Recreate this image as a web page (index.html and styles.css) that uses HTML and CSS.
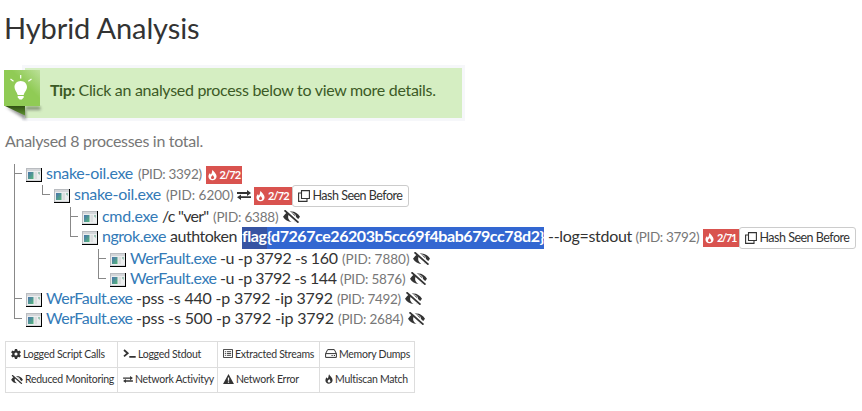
FILE: index.html
```
<!DOCTYPE html>
<html lang="en">
<head>
<meta charset="utf-8">
<title>Hybrid Analysis</title>
<link rel="stylesheet" href="styles.css">
</head>
<body>
<svg class="defs" aria-hidden="true">
  <defs>
    <linearGradient id="pane" x1="0" y1="0" x2="1" y2="1"><stop offset="0" stop-color="#4a73ae"/><stop offset="1" stop-color="#55b67a"/></linearGradient>
    <linearGradient id="tile" x1="0" y1="1" x2="1" y2="0"><stop offset=".6" stop-color="#90cb55"/><stop offset="1" stop-color="#bce09a"/></linearGradient>
    <linearGradient id="fold" x1="0" y1="0" x2="0" y2="1"><stop offset="0" stop-color="#304f13"/><stop offset="1" stop-color="#5f9530"/></linearGradient>
    <filter id="soft"><feGaussianBlur stdDeviation="1.6"/></filter>
  </defs>
  <symbol id="app" viewBox="0 0 16 14">
    <path d="M0 0H16V14H0Z" fill="#b9bcc0"/><path d="M1 1H15V3H1Z" fill="#d4d6d9"/><path d="M1 3H15V12.5H1Z" fill="#eceeef"/>
    <path d="M2 4H7.5V11H2Z" fill="url(#pane)"/><path d="M8.5 4H11V11H8.5Z" fill="#dcdedf"/><path d="M12 4H14V7L12 5.5Z" fill="#9cc4b5"/>
    <path d="M15 0H16V14H0V13H15Z" fill="#000"/>
  </symbol>
  <symbol id="fire" viewBox="0 0 12 14"><path fill-rule="evenodd" d="M6.2 0C6.8 2.4 11.4 4.6 11.4 9C11.4 12 9 14 6 14S.6 12 .6 8.9C.6 6.8 1.6 5.2 2.7 4.2C2.8 5.3 3.1 6 3.8 6.3C5.7 5.1 5 2 6.2 0ZM6.4 6.6C6.2 8 4 8.7 4 10.5C4 11.7 4.9 12.4 6 12.4S8.2 11.7 8.2 10.4C8.2 9 6.7 8.3 6.4 6.6Z"/></symbol>
  <symbol id="swap" viewBox="0 0 14 10"><path d="M0 2H10V0L14 3L10 6V4H0ZM14 6.2H4V4.4L0 7.2L4 10V8.1H14Z"/></symbol>
  <symbol id="eye" viewBox="0 0 17 13"><path d="M2 4.3C4.200 1.8 6.300 1.500 8.500 1.500C12 1.500 15 3.500 17 6.700C15.500 9 13.800 10.600 11.500 11.400C14 8.500 13.500 4.200 10 2.800C8 2.200 6.500 3 5.800 4.200C4.300 7.500 5.500 10 8.500 11.900C5 11.900 2 10 0 6.700Z"/><path d="M8 4C10.500 3.700 12 5.200 11.600 7.200" fill="none" stroke="currentColor" stroke-width="1.300"/><path d="M2.500 -.500L16.500 12.500" stroke="#fff" stroke-width="3.400"/><path d="M1.500 .300L15.500 12.600" stroke="currentColor" stroke-width="1.800"/></symbol>
  <symbol id="copy" viewBox="0 0 12 12"><path d="M3.500 .600H11.400V8.500H3.500ZM3.500 3H.600V11.400H9V8.500" fill="none" stroke="currentColor" stroke-width="1.100"/></symbol>
  <symbol id="gear" viewBox="0 0 12 12"><path d="M6 0V12M.800 3L11.200 9M11.200 3L.800 9" stroke="currentColor" stroke-width="2.800"/><circle cx="6" cy="6" r="3.200" fill="none" stroke="currentColor" stroke-width="2.600"/><circle cx="6" cy="6" r="1.900" fill="#fff"/></symbol>
  <symbol id="term" viewBox="0 0 13 9"><path d="M1 1L4.700 4.200L1 7.400M6.300 7.800H12.700" fill="none" stroke="currentColor" stroke-width="1.800"/></symbol>
  <symbol id="list" viewBox="0 0 11 10"><path d="M.500 .500H10.500V9.500H.500ZM2 3H3.200M4.200 3H9M2 5H3.200M4.200 5H9M2 7H3.200M4.200 7H9" fill="none" stroke="currentColor"/></symbol>
  <symbol id="disk" viewBox="0 0 12 9"><path d="M.600 4.600L2.700 .600H9.300L11.400 4.600V8.400H.600ZM.600 4.600H11.400M6.500 6.500H7.700M8.800 6.500H10" fill="none" stroke="currentColor" stroke-linejoin="round"/></symbol>
  <symbol id="warn" viewBox="0 0 12 11"><path fill-rule="evenodd" d="M6 0L12 11H0ZM5.300 3.800V7.300H6.700V3.800ZM5.300 8.200V9.500H6.700V8.200Z"/></symbol>
</svg>

<h1>Hybrid Analysis</h1>

<div class="tip">
  <svg class="tip-icon" viewBox="0 0 44 52" aria-hidden="true">
    <path d="M2 37L22 50V37H36L37 40H22Z" fill="#444" opacity=".55" filter="url(#soft)"/>
    <path d="M1 36H21V45.500Z" fill="url(#fold)"/>
    <path d="M21 36H36V38H21Z" fill="#4f7a2b" opacity=".35" filter="url(#soft)"/>
    <path d="M0 0H36V36H0Z" fill="url(#tile)"/>
    <path d="M16.700 11C20.600 11 23 13.800 23 17C23 20.200 20.600 21.500 19.700 25H13.700C12.800 21.500 10.500 20.200 10.500 17C10.500 13.800 12.900 11 16.700 11ZM13.700 26H19.700V27.500L17.800 29.500H15.600L13.700 27.500Z" fill="#fff"/>
    <path d="M16.700 5V8.500M6.500 9L9.500 11.200M27.500 9L24.300 11.200" stroke="#fff" stroke-width="1.200"/>
  </svg>
  <p><strong>Tip:</strong><span>Click an analysed process below to view more details.</span></p>
</div>

<p class="total">Analysed 8 processes in total.</p>

<ul class="tree">
  <li>
    <div class="row"><svg class="app"><use href="#app"/></svg><a class="snake">snake-oil.exe</a><small class="p63">(PID: 3392)</small><b class="badge"><svg><use href="#fire"/></svg><span>2/72</span></b></div>
    <ul class="second">
      <li>
        <div class="row"><svg class="app"><use href="#app"/></svg><a class="snake">snake-oil.exe</a><small class="p67">(PID: 6200)</small><svg class="swap"><use href="#swap"/></svg><b class="badge wide"><svg><use href="#fire"/></svg><span>2/72</span></b><button><svg><use href="#copy"/></svg>Hash Seen Before</button></div>
        <ul>
          <li><div class="row"><svg class="app"><use href="#app"/></svg><a class="cmd">cmd.exe</a><span class="ver">/c "ver"</span><small class="p65">(PID: 6388)</small><svg class="eye"><use href="#eye"/></svg></div></li>
          <li>
            <div class="row"><svg class="app"><use href="#app"/></svg><a class="ngrok">ngrok.exe</a><span class="auth">authtoken</span><mark><span>flag</span>{d7267ce26203b5cc69f4bab679cc78d2}</mark><span class="log">--log=stdout</span><small class="p63">(PID: 3792)</small><b class="badge tight"><svg><use href="#fire"/></svg><span>2/71</span></b><button><svg><use href="#copy"/></svg>Hash Seen Before</button></div>
            <ul>
              <li><div class="row"><svg class="app"><use href="#app"/></svg><a class="wer">WerFault.exe</a><span class="u160">-u -p 3792 -s 160</span><small class="p67">(PID: 7880)</small><svg class="eye"><use href="#eye"/></svg></div></li>
              <li><div class="row"><svg class="app"><use href="#app"/></svg><a class="wer">WerFault.exe</a><span class="u144">-u -p 3792 -s 144</span><small class="p65">(PID: 5876)</small><svg class="eye"><use href="#eye"/></svg></div></li>
            </ul>
          </li>
        </ul>
      </li>
    </ul>
  </li>
  <li><div class="row"><svg class="app"><use href="#app"/></svg><a class="wer">WerFault.exe</a><span class="pss">-pss -s 440 -p 3792 -ip 3792</span><small class="p63">(PID: 7492)</small><svg class="eye"><use href="#eye"/></svg></div></li>
  <li><div class="row"><svg class="app"><use href="#app"/></svg><a class="wer">WerFault.exe</a><span class="pss last">-pss -s 500 -p 3792 -ip 3792</span><small class="p65">(PID: 2684)</small><svg class="eye"><use href="#eye"/></svg></div></li>
</ul>

<div class="legend">
  <div><svg class="i-gear"><use href="#gear"/></svg>Logged Script Calls</div>
  <div><svg class="i-term"><use href="#term"/></svg>Logged Stdout</div>
  <div class="streams"><svg class="i-list"><use href="#list"/></svg>Extracted Streams</div>
  <div><svg class="i-disk"><use href="#disk"/></svg>Memory Dumps</div>
  <div><svg class="i-eye"><use href="#eye"/></svg>Reduced Monitoring</div>
  <div><svg class="i-swap"><use href="#swap"/></svg>Network Activityy</div>
  <div><svg class="i-warn"><use href="#warn"/></svg>Network Error</div>
  <div><svg class="i-fire"><use href="#fire"/></svg>Multiscan Match</div>
</div>
</body>
</html>
```
FILE: styles.css
```
* { box-sizing: border-box; }
body { margin: 0; background: #fff; color: #333; font: 16px/20px Lato, sans-serif; overflow: hidden; }
svg { display: block; flex: none; fill: currentColor; overflow: visible; }
.defs { position: absolute; width: 0; height: 0; }
h1 { margin: 0; padding: 10px 0 0 4px; height: 65px; font-size: 29px; line-height: 36px; font-weight: 400; letter-spacing: -.1px; }

.tip { position: relative; width: 443px; height: 56px; margin-left: 22px; border: 3px solid #f6f7fa; background: #d5eec2; color: #3c5a26; }
.tip-icon { position: absolute; left: -21px; top: 2px; width: 44px; height: 52px; }
.tip p { display: flex; margin: 0; padding: 12px 0 0 25px; white-space: nowrap; }
.tip strong { width: 28.5px; letter-spacing: -.45px; }
.tip span { letter-spacing: -.3px; }
.total { margin: 10px 0 0 5px; height: 33px; color: #777; letter-spacing: -.3px; }

.tree, .tree ul { list-style: none; margin: 0; padding: 0; }
.tree { margin-left: 14px; }
.tree ul { margin: 2px 0 0 16px; }
.tree ul.second { margin-top: 1px; }
.tree li { position: relative; padding-left: 12px; }
.tree li::before { content: ""; position: absolute; left: 0; top: 0; bottom: 0; width: 1px; background: #888; }
.tree li:last-child::before { bottom: auto; height: 10px; }
.tree li::after { content: ""; position: absolute; left: 0; top: 9px; width: 8px; height: 1px; background: #888; }
.row { display: flex; height: 20px; white-space: nowrap; }
.row > .app { width: 16px; height: 14px; margin: 4px 4px 0 0; }
.row a { color: #337ab7; }
.row a, .row > span { flex: none; line-height: 18px; }
.row small { flex: none; font-size: 13.5px; line-height: 20px; color: #777; }
.snake { width: 92px; letter-spacing: -.29px; }
.cmd { width: 60px; letter-spacing: -.28px; }
.ngrok { width: 68px; letter-spacing: -.46px; }
.wer { width: 90px; letter-spacing: -.48px; }
.ver { width: 51px; letter-spacing: -.75px; }
.auth { width: 72px; letter-spacing: -.47px; }
.log { width: 87.5px; margin-left: 4px; letter-spacing: -.3px; }
.u160 { width: 122px; letter-spacing: -.38px; }
.u144 { width: 120px; letter-spacing: -.44px; }
.pss { width: 201px; letter-spacing: -.18px; }
.pss.last { width: 202px; letter-spacing: -.15px; }
.p63 { width: 67.5px; letter-spacing: -.35px; }
.p67 { width: 71px; }
.p65 { width: 69.500px; letter-spacing: -.2px; }
.eye { width: 17px; height: 13px; margin-top: 3px; }
.swap { width: 14px; height: 10px; margin: 5px 3px 0 0; }
.badge { display: flex; align-items: center; flex: none; width: 36px; height: 18px; margin-top: 2px; padding-left: 2px; background: #d9534f; color: #fff; font-size: 11px; line-height: 18px; letter-spacing: -.9px; }
.badge svg { width: 9px; height: 12px; margin-right: 3px; }
.badge.wide { width: 38px; }
.badge.tight { letter-spacing: -1.300px; }
button { display: flex; align-items: center; flex: none; width: 117px; height: 22px; margin-top: 1px; padding: 0 0 0 5px; border: 1px solid #ccc; border-radius: 3px; background: #fff; color: #333; font: 12.5px/20px Lato, sans-serif; letter-spacing: -.5px; white-space: nowrap; }
button svg { width: 12px; height: 12px; margin-right: 3px; }
.row button { margin: 0 0 0 -.5px; }
mark { display: flex; flex: none; width: 302px; height: 22px; background: #3367d1; color: #fff; font-weight: 700; line-height: 18px; letter-spacing: -.43px; }
mark span { width: 25px; background: #3654a3; }

.legend { display: grid; grid-template-columns: 112px 100px 102px 95px; grid-template-rows: 26px 25px; width: 410px; margin: 12px 0 0 5px; border: solid #ddd; border-width: 1px 0 0 1px; font-size: 10.5px; line-height: 24px; letter-spacing: -.27px; white-space: nowrap; }
.legend div { display: flex; align-items: center; padding: 0 0 2px 5px; border: solid #ddd; border-width: 0 1px 1px 0; }
.legend svg { margin-right: 2px; }
.legend .i-gear { width: 10px; height: 10px; }
.i-term { width: 13px; height: 9px; }
.i-list { width: 10px; height: 9px; }
.i-disk { width: 12px; height: 9px; }
.i-eye { width: 12px; height: 9px; }
.i-swap { width: 10px; height: 7px; }
.i-warn { width: 11px; height: 10px; }
.i-fire { width: 8px; height: 10px; }
```
